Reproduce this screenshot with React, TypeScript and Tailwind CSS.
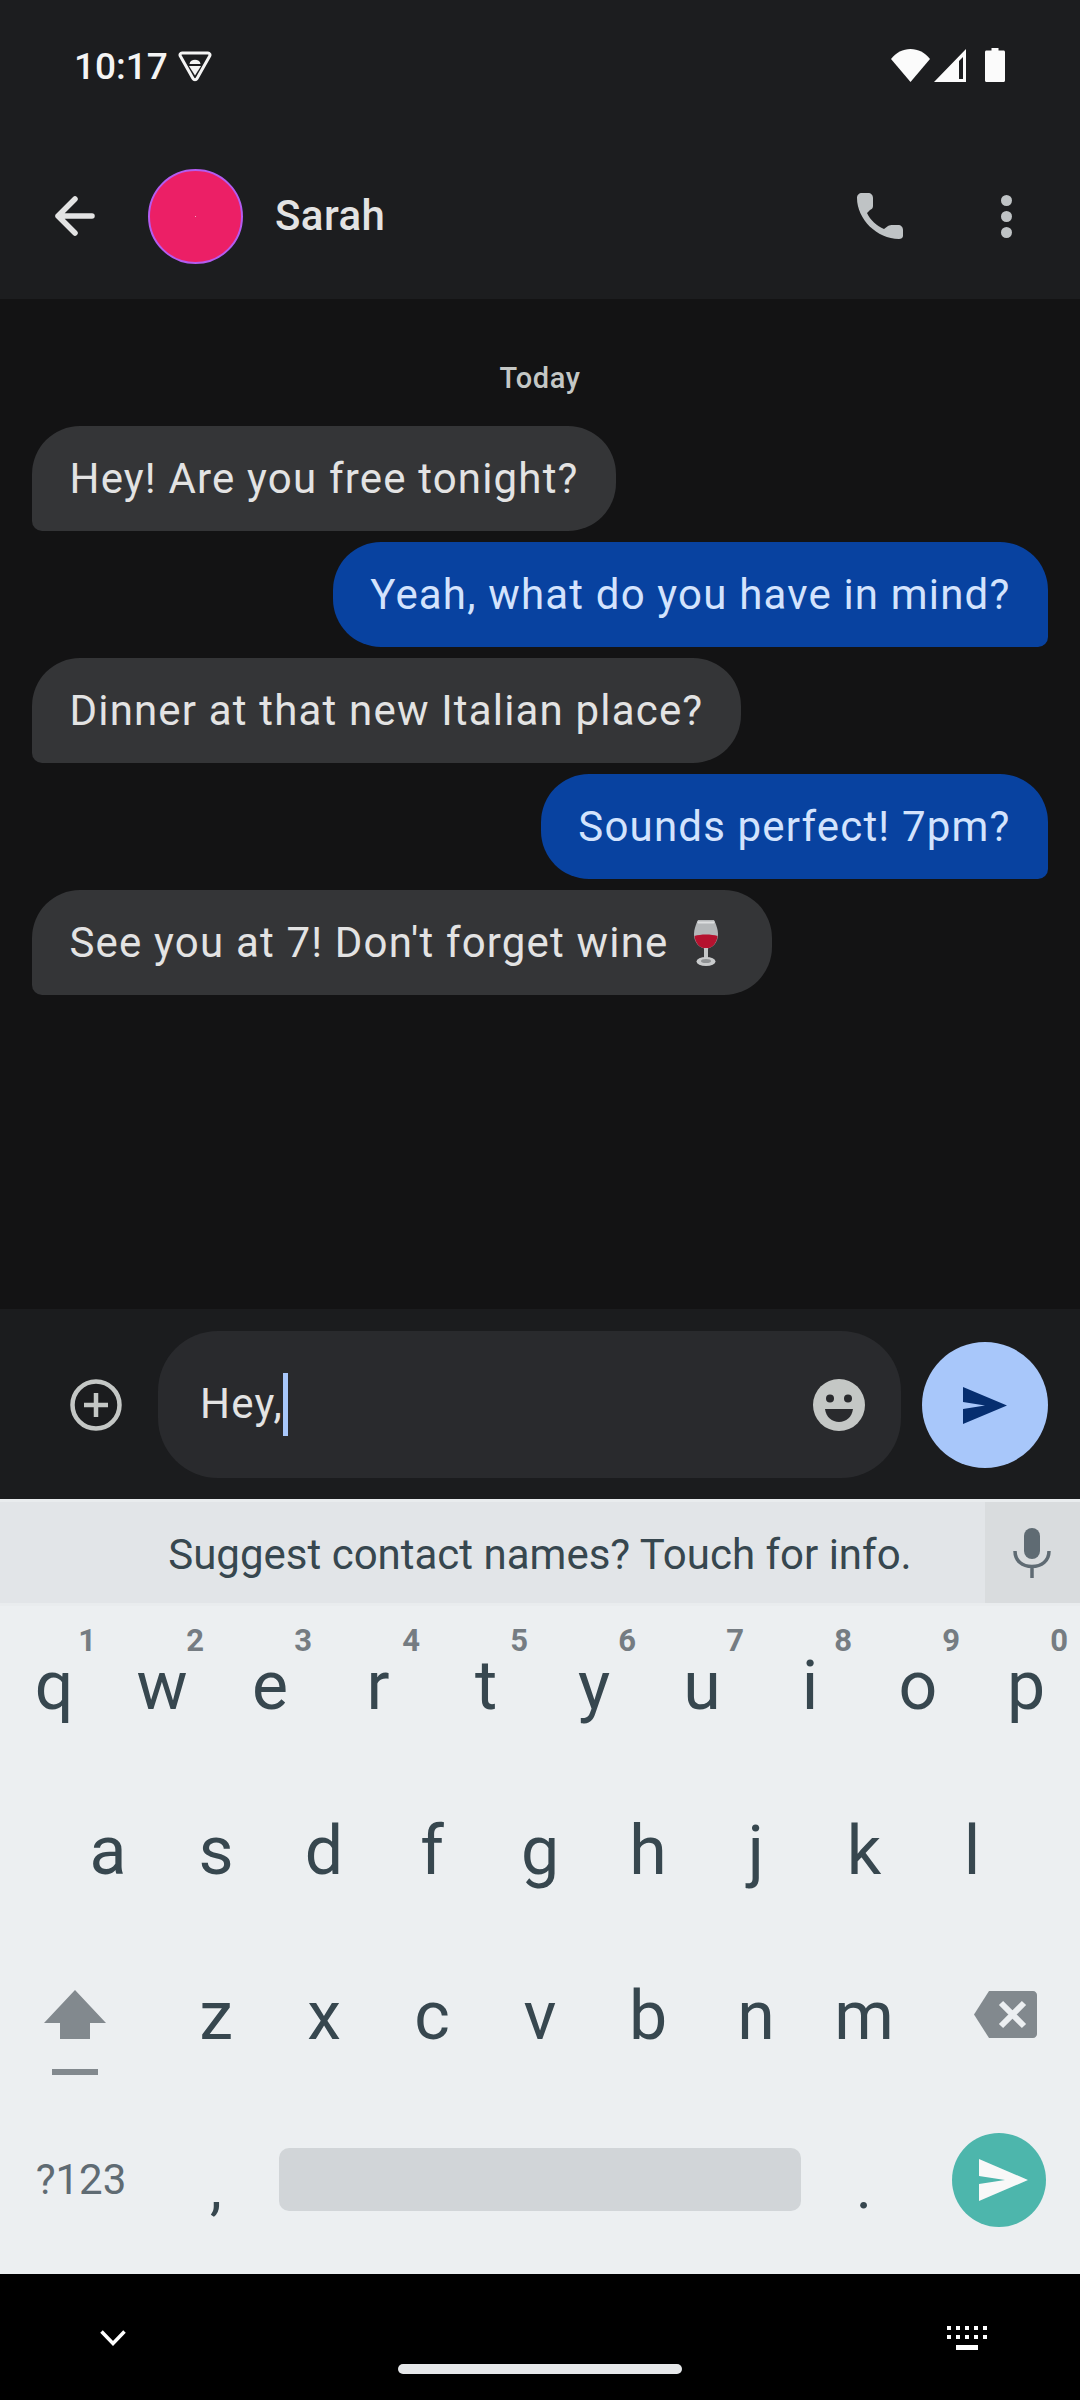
import React from "react"

const topRow = [
    ["q", "1"], ["w", "2"], ["e", "3"], ["r", "4"], ["t", "5"],
    ["y", "6"], ["u", "7"], ["i", "8"], ["o", "9"], ["p", "0"],
]
const midRow = ["a", "s", "d", "f", "g", "h", "j", "k", "l"]
const lowRow = ["z", "x", "c", "v", "b", "n", "m"]

const messages = [
    { text: "Hey! Are you free tonight?", sent: false },
    { text: "Yeah, what do you have in mind?", sent: true },
    { text: "Dinner at that new Italian place?", sent: false },
    { text: "Sounds perfect! 7pm?", sent: true },
    { text: "See you at 7! Don't forget wine", sent: false, wine: true },
]

const WineGlass = () => (
    <svg width="24" height="46" viewBox="0 0 24 46" className="ml-[25px] mr-[17px] shrink-0">
        <path d="M4 0h16c2.500 5 4 10 4 14 0 8-5 14.500-12 14.500S0 22 0 14C0 10 1.500 5 4 0z" fill="#b4b7b9" />
        <path d="M3 1.500h18l-1 2H4z" fill="#dcdedf" />
        <path d="M.5 16c6-2 17-2 23 0-.5 7-5.500 12.500-11.500 12.500S1 23 .5 16z" fill="#b5122f" />
        <rect x="10" y="28" width="4" height="11" fill="#c4c7c8" />
        <ellipse cx="12" cy="41.500" rx="9.500" ry="4.500" fill="#c9cbcc" />
        <ellipse cx="12" cy="41" rx="5" ry="2" fill="#8f9294" />
    </svg>
)

const Key = ({ label, hint }: { label: string; hint?: string }) => (
    <div className="relative flex h-full w-[108px] items-center justify-center pb-[5px]">
        {hint && (
            <span className="absolute right-[12px] top-[19px] text-[31px] leading-[32px] font-bold text-[#757c82]">{hint}</span>
        )}
        <span className="text-[68px] leading-none text-[#37474f]">{label}</span>
    </div>
)

export default function App() {
    return (
        <div className="flex h-[2400px] w-[1080px] flex-col bg-[#131314] font-['Roboto',sans-serif]">
            <header className="h-[299px] shrink-0 bg-[#1c1d1f]">
                <div className="flex h-[130px] items-center justify-between pl-[74px] pr-[75px]">
                    <div className="flex items-center gap-[10px] pt-[3px]">
                        <span className="text-[37px] leading-none font-medium text-[#f4f4f4]">10:17</span>
                        <svg width="34" height="31" viewBox="0 0 34 31" fill="none">
                            <path d="M4 2h26c1.500 0 2.500 1.600 1.700 3L19 27.500c-.9 1.600-3.100 1.600-4 0L2.300 5C1.500 3.600 2.500 2 4 2z" stroke="#f4f4f4" strokeWidth="3" />
                            <path d="M11.500 13c.4-2.800 2.800-4.200 5.500-4.200s5.100 1.400 5.500 4.200z" fill="#f4f4f4" />
                            <path d="M11 15h12l-6 9.500z" fill="#f4f4f4" />
                        </svg>
                    </div>
                    <div className="flex items-center">
                        <svg width="39" height="33" viewBox="0 0 39 33" className="mr-[4px]">
                            <path d="M0 10C5 3.500 12 0 19.500 0S34 3.500 39 10L19.500 33z" fill="#fbfbfb" />
                        </svg>
                        <svg width="32" height="33" viewBox="0 0 32 33" className="mr-[19px]">
                            <path fillRule="evenodd" d="M32 0v33H0zM29 8l-4 4v18h4z" fill="#fbfbfb" />
                        </svg>
                        <svg width="20" height="34" viewBox="0 0 20 34">
                            <path d="M6.500 0h7v2.500h5c.9 0 1.500.6 1.500 1.500v28.500c0 .9-.6 1.500-1.500 1.500h-17C.6 34 0 33.400 0 32.500V4c0-.9.6-1.500 1.500-1.500h5z" fill="#fbfbfb" />
                        </svg>
                    </div>
                </div>
                <div className="flex h-[169px] items-center pl-[55px] pr-[68px] pt-[3px]">
                    <svg width="40" height="40" viewBox="0 0 40 40" fill="none" stroke="#e3e3e3" strokeWidth="5.500" strokeLinecap="round" strokeLinejoin="round" className="mr-[53px] shrink-0">
                        <path d="M37 20H3M20 3L3 20l17 17" />
                    </svg>
                    <div className="flex h-[95px] w-[95px] shrink-0 items-center justify-center rounded-full border-2 border-[#b45cf0] bg-[#ec1f66]">
                        <div className="h-[1px] w-[1px] bg-[#f3a0bb]" />
                    </div>
                    <span className="ml-[32px] text-[42px] leading-none font-medium tracking-[0.01em] text-[#e3e3e3]">Sarah</span>
                    <div className="flex-1" />
                    <svg width="46" height="46" viewBox="0 0 46 46" fill="#bfc3c5" className="mr-[98px] shrink-0">
                        <path d="M0 5C0 2 2 0 5 0H11C14 0 16 2 16 5V13C16 15 15 16 13 17L10 20C13 27 20 33 27 36L31 33C32.500 32 34 32 36 32H41C44 32 46 34 46 37V43C46 45 44 46 42 46C20 46 0 26 0 5Z" />
                    </svg>
                    <div className="flex shrink-0 flex-col gap-[5px]">
                        <div className="h-[11px] w-[11px] rounded-full bg-[#bfc3c5]" />
                        <div className="h-[11px] w-[11px] rounded-full bg-[#bfc3c5]" />
                        <div className="h-[11px] w-[11px] rounded-full bg-[#bfc3c5]" />
                    </div>
                </div>
            </header>

            <main className="flex flex-1 flex-col px-[32px] pt-[61px]">
                <div className="mb-[30px] flex h-[36px] items-center justify-center text-[29px] leading-none font-medium tracking-[0.02em] text-[#c4c7c5]">Today</div>
                <div className="flex flex-col gap-[11px]">
                    {messages.map((m) =>
                        m.sent ? (
                            <div key={m.text} className="flex h-[105px] items-center self-end rounded-[48px] rounded-br-[10px] bg-[#0842a0] px-[37.5px] text-[42px] leading-none tracking-[0.028em] text-[#d3e3fd]">
                                {m.text}
                            </div>
                        ) : (
                            <div key={m.text} className="flex h-[105px] items-center self-start rounded-[48px] rounded-bl-[10px] bg-[#343537] px-[37.5px] text-[42px] leading-none tracking-[0.028em] text-[#e3e3e3]">
                                {m.text}
                                {m.wine && <WineGlass />}
                            </div>
                        )
                    )}
                </div>
            </main>

            <section className="flex h-[190px] shrink-0 items-center bg-[#1b1c1e] pl-[70px] pr-[32px]">
                <svg width="52" height="52" viewBox="0 0 52 52" fill="none" stroke="#c4c7c5" strokeWidth="4.500" className="mr-[36px] mt-[1px] shrink-0">
                    <circle cx="26" cy="26" r="23.500" />
                    <path d="M26 14v24M14 26h24" />
                </svg>
                <div className="flex h-[147px] w-[743px] shrink-0 items-center rounded-[60px] bg-[#292a2d] pl-[42px] pr-[36px]">
                    <span className="text-[42px] leading-none tracking-[0.03em] text-[#e3e3e3]">Hey,</span>
                    <div className="h-[63px] w-[5px] shrink-0 bg-[#a8c7fa]" />
                    <div className="flex-1" />
                    <svg width="52" height="52" viewBox="0 0 52 52" className="mt-[1px] shrink-0">
                        <circle cx="26" cy="26" r="26" fill="#c4c7c5" />
                        <circle cx="17" cy="19.500" r="4" fill="#292a2d" />
                        <circle cx="35" cy="19.500" r="4" fill="#292a2d" />
                        <path d="M12 30h28c-1 8-7 13-14 13s-13-5-14-13z" fill="#292a2d" />
                    </svg>
                </div>
                <div className="ml-[21px] mt-[2px] flex h-[126px] w-[126px] shrink-0 items-center justify-center rounded-full bg-[#a8c7fa]">
                    <svg width="44" height="37" viewBox="0 0 44 37" fill="#062e6f">
                        <path d="M0 0l44 18.500L0 37V22l22-3.500L0 15z" />
                    </svg>
                </div>
            </section>

            <section className="h-[775px] shrink-0 bg-[#eceff1]">
                <div className="flex h-[107px] border-y-[3px] border-[#e9ecee] bg-[#e2e5e8]">
                    <div className="flex flex-1 items-center justify-center pt-[5px]">
                        <span className="pl-[95px] text-[42px] leading-none text-[#37474f]">Suggest contact names? Touch for info.</span>
                    </div>
                    <div className="flex w-[95px] shrink-0 items-center justify-center bg-[#d9dcde]">
                        <svg width="38" height="50" viewBox="0 0 38 50" fill="none" className="ml-[-1px]">
                            <rect x="11" y="0" width="16" height="31" rx="8" fill="#5f6b73" />
                            <path d="M2 23c0 10 7.500 15.500 17 15.500S36 33 36 23M19 38v12" stroke="#5f6b73" strokeWidth="3.500" />
                        </svg>
                    </div>
                </div>

                <div className="flex h-[165px]">
                    {topRow.map(([l, n]) => (
                        <Key key={l} label={l} hint={n} />
                    ))}
                </div>
                <div className="flex h-[165px] pl-[54px]">
                    {midRow.map((l) => (
                        <Key key={l} label={l} />
                    ))}
                </div>
                <div className="flex h-[165px]">
                    <div className="flex w-[162px] flex-col items-center pr-[12px] pt-[54px]">
                        <svg width="62" height="49" viewBox="0 0 62 49" fill="#82898e">
                            <path d="M31 0l31 33H46v16H16V33H0z" />
                        </svg>
                        <div className="mt-[30px] h-[6px] w-[46px] bg-[#82898e]" />
                    </div>
                    {lowRow.map((l) => (
                        <Key key={l} label={l} />
                    ))}
                    <div className="flex w-[162px] items-start justify-center pl-[12px] pt-[55px]">
                        <svg width="63" height="47" viewBox="0 0 63 47">
                            <path d="M15 0h44c2.200 0 4 1.800 4 4v39c0 2.200-1.800 4-4 4H15L0 23.500z" fill="#82898e" />
                            <path d="M27 12l23 23M50 12L27 35" stroke="#eceff1" strokeWidth="6" />
                        </svg>
                    </div>
                </div>
                <div className="flex h-[173px] items-start">
                    <div className="flex h-[158px] w-[162px] items-center justify-center">
                        <span className="text-[42px] leading-none text-[#5f6b73]">?123</span>
                    </div>
                    <div className="flex h-[158px] w-[108px] items-center justify-center pt-[16px]">
                        <span className="text-[60px] leading-none text-[#37474f]">,</span>
                    </div>
                    <div className="mx-[9px] mt-[47px] h-[63px] w-[522px] rounded-[10px] bg-[#d1d5d8]" />
                    <div className="flex h-[158px] w-[108px] items-center justify-center pt-[16px]">
                        <span className="text-[60px] leading-none text-[#37474f]">.</span>
                    </div>
                    <div className="flex h-[158px] w-[162px] items-center justify-center">
                        <div className="flex h-[94px] w-[94px] items-center justify-center rounded-full bg-[#4db6ac]">
                            <svg width="49" height="42" viewBox="0 0 49 42" fill="#f8f8f8" className="ml-[8px]">
                                <path d="M0 0l49 21L0 42V25l26-4L0 17z" />
                            </svg>
                        </div>
                    </div>
                </div>
            </section>

            <nav className="relative h-[126px] shrink-0 bg-black">
                <div className="flex h-[126px] items-start justify-between pl-[100px] pr-[93px] pt-[52px]">
                    <svg width="26" height="16" viewBox="0 0 26 16" fill="none" stroke="#fff" strokeWidth="3.500" className="mt-[4px]">
                        <path d="M1.500 1.500L13 13.500 24.500 1.500" />
                    </svg>
                    <svg width="40" height="24" viewBox="0 0 40 24" fill="#fff">
                        <rect x="0" y="0" width="4" height="4" /><rect x="9" y="0" width="4" height="4" /><rect x="18" y="0" width="4" height="4" /><rect x="27" y="0" width="4" height="4" /><rect x="36" y="0" width="4" height="4" />
                        <rect x="0" y="9" width="4" height="4" /><rect x="9" y="9" width="4" height="4" /><rect x="18" y="9" width="4" height="4" /><rect x="27" y="9" width="4" height="4" /><rect x="36" y="9" width="4" height="4" />
                        <rect x="9" y="19" width="22" height="5" />
                    </svg>
                </div>
                <div className="absolute left-[398px] top-[90px] h-[10px] w-[284px] rounded-full bg-[#e6e8ea]" />
            </nav>
        </div>
    )
}
